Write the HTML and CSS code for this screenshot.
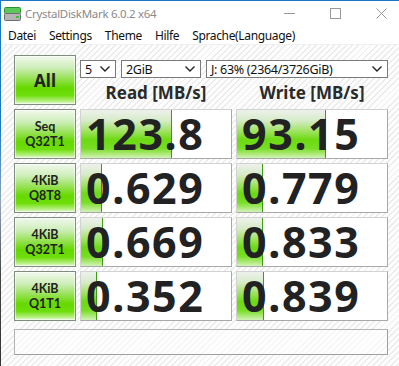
FILE: index.html
```html
<!DOCTYPE html>
<html lang="de">
<head>
    <meta charset="UTF-8">
    <meta name="viewport" content="width=device-width, initial-scale=1.0">
    <title>CrystalDiskMark 6.0.2 x64</title>
    <link rel="stylesheet" href="styles.css">
</head>
<body>
    <div class="window">
        <div class="titlebar">
            <svg class="app-icon" width="17" height="14" viewBox="0 0 17 14">
                <rect x="0.5" y="0.5" width="16" height="6" rx="1" fill="#5cc85c" stroke="#2f8f2f"/>
                <rect x="0.5" y="6.5" width="16" height="7" rx="1" fill="#b4b4b4" stroke="#6e6e6e"/>
                <rect x="12" y="9" width="3" height="2" fill="#3cbf3c"/>
            </svg>
            <span class="title">CrystalDiskMark 6.0.2 x64</span>
            <div class="caption">
                <span class="cap-btn">
                    <svg width="11" height="11" viewBox="0 0 11 11"><path d="M0 5.5H11" stroke="#999" stroke-width="1"/></svg>
                </span>
                <span class="cap-btn">
                    <svg width="11" height="11" viewBox="0 0 11 11"><rect x="0.5" y="0.5" width="10" height="10" fill="none" stroke="#999"/></svg>
                </span>
                <span class="cap-btn">
                    <svg width="11" height="11" viewBox="0 0 11 11"><path d="M0.5 0.5L10.5 10.5M10.5 0.5L0.5 10.5" stroke="#999" stroke-width="1"/></svg>
                </span>
            </div>
        </div>

        <div class="menubar">
            <span>Datei</span>
            <span>Settings</span>
            <span>Theme</span>
            <span>Hilfe</span>
            <span>Sprache(Language)</span>
        </div>

        <div class="client">
            <div class="board">
                <div class="btn btn-all">All</div>

                <div class="controls">
                    <div class="selects">
                        <div class="combo combo-count">5 <svg class="chev" width="10" height="6" viewBox="0 0 10 6"><path d="M0.5 0.5L5 5L9.5 0.5" fill="none" stroke="#222" stroke-width="1.4"/></svg></div>
                        <div class="combo combo-size">2GiB <svg class="chev" width="10" height="6" viewBox="0 0 10 6"><path d="M0.5 0.5L5 5L9.5 0.5" fill="none" stroke="#222" stroke-width="1.4"/></svg></div>
                        <div class="combo combo-drive">J: 63% (2364/3726GiB) <svg class="chev" width="10" height="6" viewBox="0 0 10 6"><path d="M0.5 0.5L5 5L9.5 0.5" fill="none" stroke="#222" stroke-width="1.4"/></svg></div>
                    </div>
                    <div class="heads">
                        <div>Read [MB/s]</div>
                        <div>Write [MB/s]</div>
                    </div>
                </div>

                <div class="btn"><span>Seq</span><span>Q32T1</span></div>
                <div class="value"><div class="bar" style="width: 91px"></div><span>123.8</span></div>
                <div class="value"><div class="bar" style="width: 89px"></div><span>93.15</span></div>

                <div class="btn"><span>4KiB</span><span>Q8T8</span></div>
                <div class="value"><div class="bar" style="width: 21px"></div><span>0.629</span></div>
                <div class="value"><div class="bar" style="width: 26px"></div><span>0.779</span></div>

                <div class="btn"><span>4KiB</span><span>Q32T1</span></div>
                <div class="value"><div class="bar" style="width: 22px"></div><span>0.669</span></div>
                <div class="value"><div class="bar" style="width: 26px"></div><span>0.833</span></div>

                <div class="btn"><span>4KiB</span><span>Q1T1</span></div>
                <div class="value"><div class="bar" style="width: 16px"></div><span>0.352</span></div>
                <div class="value"><div class="bar" style="width: 27px"></div><span>0.839</span></div>

                <div class="comment"></div>
            </div>
        </div>
    </div>
</body>
</html>
```

FILE: styles.css
```css
* {
    margin: 0;
    padding: 0;
    box-sizing: border-box;
}

body {
    font-family: 'Noto Sans', 'Open Sans', sans-serif;
    width: 399px;
    height: 366px;
    overflow: hidden;
    background: #fff;
}

.window {
    width: 399px;
    height: 366px;
    overflow: hidden;
    border-top: 1px solid #1a78c6;
    border-left: 1px solid #1a78c6;
    border-image: linear-gradient(to bottom, #1a78c6 0%, #1a78c6 35%, #8fa6bb 55%, #444 75%, #333 100%) 1;
    border-right: 0;
    border-bottom: 0;
    background: #fff;
}

/* title bar */
.titlebar {
    height: 25px;
    display: flex;
    align-items: center;
    padding-left: 3px;
    background: #fff;
}

.app-icon {
    margin-top: 1px;
}

.title {
    margin-left: 4px;
    font-size: 11.5px;
    color: #8a8a8a;
    letter-spacing: -0.3px;
}

.caption {
    margin-left: auto;
    margin-right: -5px;
    display: flex;
}

.cap-btn {
    width: 46px;
    height: 25px;
    display: flex;
    align-items: center;
    justify-content: center;
}

/* menu */
.menubar {
    height: 19px;
    display: flex;
    align-items: center;
    gap: 13px;
    padding-left: 7px;
    font-size: 12px;
    color: #111;
    letter-spacing: -0.35px;
    background: #fff;
    border-bottom: 1px solid #f0f0f0;
}

/* client area */
.client {
    height: 321px;
    padding: 10px 0 0 13px;
    background: repeating-linear-gradient(135deg, #fdfdfd 0 3px, #ececec 3px 4.3px);
}

.board {
    display: grid;
    grid-template-columns: 62px 152px 152px;
    grid-template-rows: repeat(5, 50px) 30px;
    column-gap: 4px;
    row-gap: 4px;
}

.btn {
    display: flex;
    flex-direction: column;
    align-items: center;
    justify-content: center;
    text-align: center;
    font-family: 'Lato', 'Noto Sans', sans-serif;
    font-size: 12.5px;
    font-weight: 700;
    line-height: 15px;
    color: #222;
    border: 1px solid #7f8c7f;
    box-shadow: inset 0 0 0 1px rgba(255, 255, 255, 0.55);
    background: linear-gradient(to bottom, #f2f8ee 0%, #cdeeb8 25%, #8fe048 50%, #66d900 66%, #6ede0a 82%, #b6f080 94%, #e2f9d0 100%);
}

.btn span {
    display: block;
}

.btn-all {
    font-family: 'Noto Sans', sans-serif;
    font-size: 17px;
}

.controls {
    grid-column: 2 / 4;
    display: flex;
    flex-direction: column;
}

.selects {
    display: flex;
    gap: 5px;
    margin-top: 5px;
    height: 18px;
}

.combo {
    display: flex;
    align-items: center;
    padding: 0 5px 0 4px;
    border: 1px solid #7a7a7a;
    background: #fff;
    font-size: 12.5px;
    color: #111;
    letter-spacing: -0.3px;
}

.chev {
    margin-left: auto;
}

.combo-count {
    width: 36px;
}

.combo-size {
    width: 80px;
}

.combo-drive {
    width: 182px;
}

.heads {
    display: grid;
    grid-template-columns: 152px 152px;
    column-gap: 4px;
    flex: 1;
    align-items: center;
    padding-top: 2px;
    text-align: center;
    font-size: 17px;
    font-weight: 700;
    color: #2a2a2a;
}

.value {
    position: relative;
    display: flex;
    align-items: center;
    padding-left: 5px;
    border: 1px solid;
    border-color: #d2d2d2 #a8a8a8 #a8a8a8 #d2d2d2;
    background: #fff;
}

.value .bar {
    position: absolute;
    left: 0;
    top: 0;
    bottom: 0;
    border-right: 1px solid #3f9a14;
    background: linear-gradient(to bottom, #eef1ec 0%, #d6ebc8 22%, #9ee25e 45%, #6cda12 62%, #78dd24 80%, #aeea7c 92%, #d2f3b8 100%);
}

.value span {
    position: relative;
    font-size: 43px;
    font-weight: 700;
    line-height: 48px;
    color: #222;
    letter-spacing: 1.6px;
}

.comment {
    grid-column: 1 / 4;
    margin-top: 4px;
    border: 1px solid;
    border-color: #b4b4b4 #a0a0a0 #a0a0a0 #b4b4b4;
    background: rgba(255, 255, 255, 0.55);
}
```
